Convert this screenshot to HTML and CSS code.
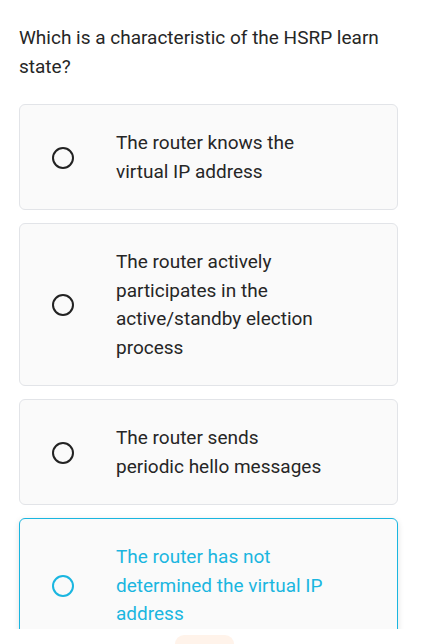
FILE: index.html
```html
<!DOCTYPE html>
<html>
<head>
	<meta charset="utf-8">
	<meta name="viewport" content="width=device-width, initial-scale=1">
	<title>Quiz</title>
	<link rel="stylesheet" href="styles.css">
</head>
<body>
	<div class=page>
		<main class=quiz>
			<p class=question>Which is a characteristic of the HSRP learn state?</p>
			<div class=options>
				<label class=option>
					<span class=radio></span>
					<span class=answer>The router knows the virtual IP address</span>
				</label>
				<label class=option>
					<span class=radio></span>
					<span class=answer>The router actively participates in the active/standby election process</span>
				</label>
				<label class=option>
					<span class=radio></span>
					<span class=answer>The router sends periodic hello messages</span>
				</label>
				<label class="option selected">
					<span class=radio></span>
					<span class=answer>The router has not determined the virtual IP address</span>
				</label>
			</div>
		</main>
		<footer class=bar>
			<button type=button class=next></button>
		</footer>
	</div>
</body>
</html>
```

FILE: styles.css
```css
* {
	box-sizing: border-box;
}
body {
	margin: 0;
	background: #fff;
	color: #262626;
	font-family: Roboto, "Noto Sans", Arial, sans-serif;
	font-size: 19px;
	line-height: 28.5px;
}
.page {
	height: 100vh;
	display: flex;
	flex-direction: column;
}
.quiz {
	flex: 1;
	overflow: hidden;
	padding: 24px 28px 0 19px;
}
.question {
	margin: 0 0 23px;
}
.options {
	display: flex;
	flex-direction: column;
	gap: 13px;
}
.option {
	display: flex;
	align-items: center;
	background: #fafafa;
	border: 1px solid #e2e4e8;
	border-radius: 6px;
	padding: 24px 20px 23px 32px;
	cursor: pointer;
}
.radio {
	flex: none;
	width: 22px;
	height: 22px;
	border: 2.5px solid #222;
	border-radius: 50%;
	margin-right: 42px;
}
.answer {
	max-width: 215px;
}
.selected {
	border-color: #1ab6e0;
	color: #1ab6e0;
	box-shadow: 0 2px 6px rgba(0,0,0,0.12);
}
.selected .radio {
	border-color: #1ab6e0;
}
.bar {
	flex: none;
	height: 15px;
	display: flex;
	justify-content: center;
	align-items: flex-end;
}
.next {
	width: 59px;
	height: 9px;
	border: none;
	border-radius: 10px 10px 0 0;
	background: #fff3ea;
	padding: 0;
	margin-right: 18px;
}
```
